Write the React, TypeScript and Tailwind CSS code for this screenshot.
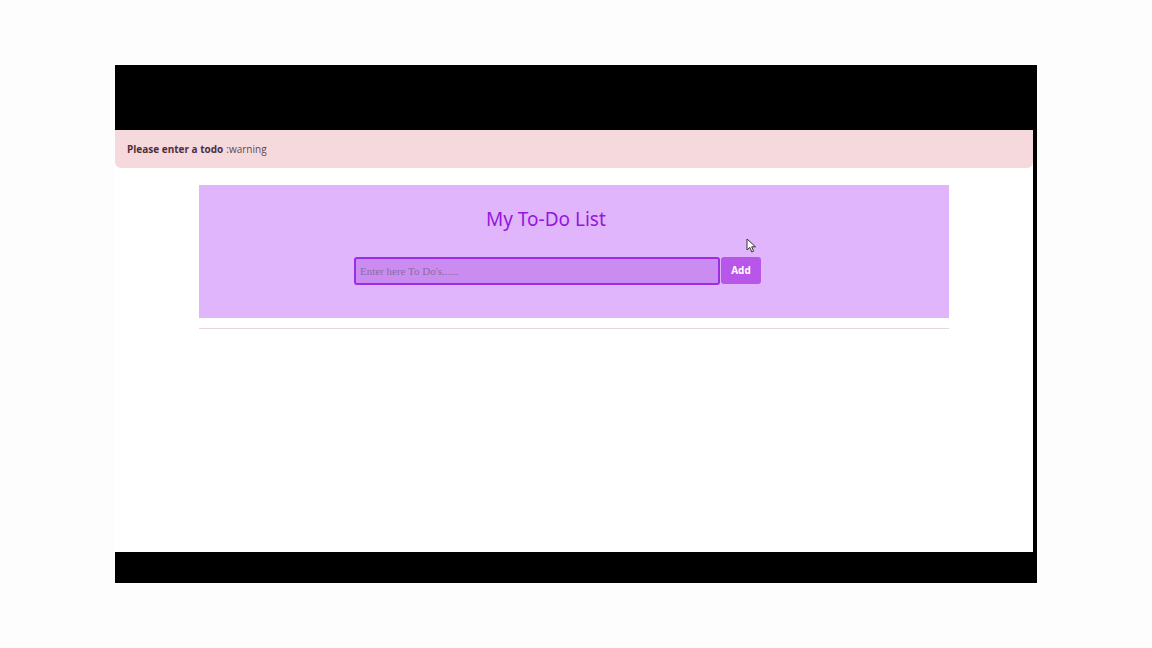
import React from "react";

function Cursor() {
  return (
    <svg
      className="absolute left-[746px] top-[238px]"
      width="11"
      height="15"
      viewBox="0 0 11 15"
    >
      <path d="M1 1 L1 12 L3.8 9.4 L5.8 14 L7.6 13.2 L5.7 8.8 L9.5 8.8 Z" fill="#ffffff" stroke="#333333" strokeWidth="1" strokeLinejoin="round" />
    </svg>
  );
}

export default function App() {
  return (
    <div className="relative w-full h-[648px] bg-[#fdfdfd] pt-[65px] pl-[115px] font-['Open_Sans',sans-serif]">
      <div className="w-[922px] h-[518px] bg-black flex flex-col">
        <div className="h-[65px]" />
        <div className="flex h-[422px]">
          <div className="w-[918px] bg-white flex flex-col">
            {/* alert */}
            <div className="h-[38px] bg-[#f6d9dc] rounded-b-md flex items-center pl-3 pt-px text-[10px] text-[#4b2f3c]">
              <span className="font-bold">Please enter a todo</span>
              <span className="ml-[3px] text-[#5a4a55]">:warning</span>
            </div>

            {/* todo card */}
            <div className="mt-[17px] ml-[84px] w-[750px] h-[133px] bg-[#e1b5fb] flex flex-col pt-5">
              <div className="pl-[287px] h-7 leading-7 text-[19px] text-[#9416df] font-['Noto_Sans',sans-serif]">
                My To-Do List
              </div>
              <div className="mt-6 pl-[155px] flex items-start gap-px">
                <input
                  className="w-[366px] h-[28px] rounded-[3px] border-2 border-[#9a2ee2] bg-[#cb8cf1] px-1 text-[11px] font-['Liberation_Serif',serif] placeholder:text-[#8d6aa3] outline-none"
                  placeholder="Enter here To Do's......"
                />
                <button className="w-10 h-[27px] rounded-[3px] bg-[#b756e8] text-white text-[10px] font-bold">
                  Add
                </button>
              </div>
            </div>

            <div className="mt-[10px] ml-[84px] w-[750px] h-px bg-[#e9d6dc]" />
          </div>
          <div className="w-1" />
        </div>
        <div className="flex-1" />
      </div>
      <Cursor />
    </div>
  );
}
